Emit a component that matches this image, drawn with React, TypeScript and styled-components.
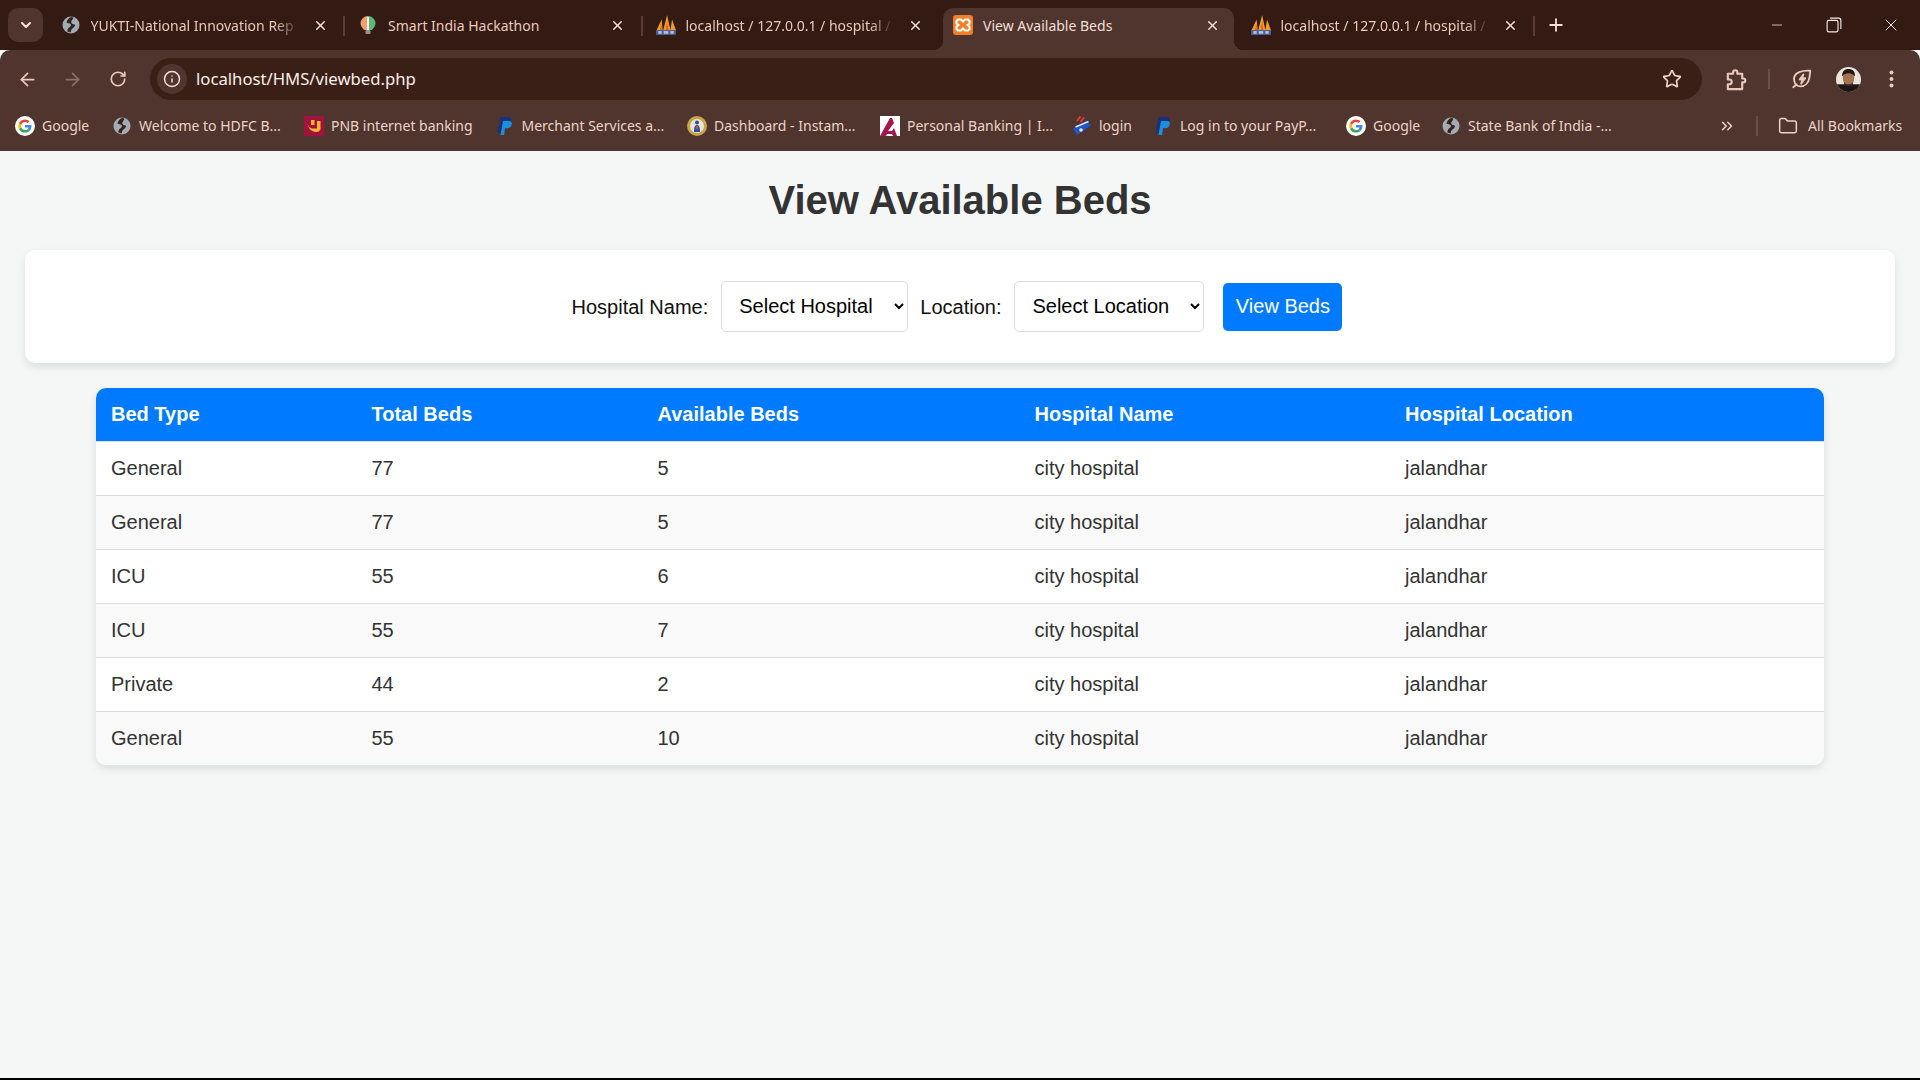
import React from "react";
import styled, { createGlobalStyle } from "styled-components";
import {
  ArrowLeft,
  ArrowRight,
  ChevronDown,
  ChevronsRight,
  Folder,
  Info,
  Minus,
  Plus,
  RotateCw,
  Star,
  X,
} from "lucide-react";

const GlobalStyle = createGlobalStyle`
  html, body {
    margin: 0;
    padding: 0;
    height: 1080px;
    overflow: hidden;
    background: #f4f7f6;
    font-family: "Liberation Sans", Arial, sans-serif;
  }
  * { box-sizing: border-box; }
`;

const chromeFont = `"Noto Sans", "Open Sans", sans-serif`;

const Shell = styled.div`
  width: 1920px;
  height: 1080px;
  display: flex;
  flex-direction: column;
`;

/* ---------- tab strip ---------- */
const TabStrip = styled.div`
  height: 50px;
  background: #331a12;
  display: flex;
  align-items: flex-end;
  padding-left: 8px;
  flex: none;
`;

const TabSearch = styled.div`
  width: 35px;
  height: 34px;
  margin-bottom: 8px;
  margin-right: 7.5px;
  border-radius: 10px;
  background: #4f352e;
  color: #f7e4dc;
  display: flex;
  align-items: center;
  justify-content: center;
  flex: none;
`;

const Tab = styled.div<{ $active?: boolean; $sep?: boolean }>`
  position: relative;
  width: 290.5px;
  height: 42px;
  margin-right: 7px;
  padding: 0 11px 8px 10px;
  flex: none;
  display: flex;
  align-items: center;
  border-radius: 10px 10px 0 0;
  background: ${(p) => (p.$active ? "#4f352e" : "transparent")};
  color: ${(p) => (p.$active ? "#f3dfd7" : "#ecc9bc")};
  font-family: ${chromeFont};
  font-size: 14px;

  ${(p) =>
    p.$active
      ? `
    &::before, &::after {
      content: "";
      position: absolute;
      bottom: 0;
      width: 10px;
      height: 10px;
    }
    &::before { left: -10px; background: radial-gradient(circle at 0 0, transparent 10px, #4f352e 10.5px); }
    &::after { right: -10px; background: radial-gradient(circle at 100% 0, transparent 10px, #4f352e 10.5px); }
  `
      : ""}

  ${(p) =>
    p.$sep
      ? `
    &::after {
      content: "";
      position: absolute;
      right: -4px;
      top: 8px;
      width: 2px;
      height: 20px;
      background: #5a3e35;
    }
  `
      : ""}
`;

const TabIcon = styled.span`
  width: 20px;
  height: 20px;
  flex: none;
  margin-right: 10px;
  display: flex;
  align-items: center;
  justify-content: center;

  svg {
    flex: none;
  }
`;

const TabTitle = styled.span<{ $fade?: boolean }>`
  flex: 1;
  min-width: 0;
  white-space: nowrap;
  ${(p) =>
    p.$fade
      ? `-webkit-mask-image: linear-gradient(90deg, #000 88%, transparent 100%);
         mask-image: linear-gradient(90deg, #000 88%, transparent 100%);`
      : ""}
`;

const TabClose = styled.span`
  width: 20px;
  height: 20px;
  flex: none;
  margin-left: 10px;
  display: flex;
  align-items: center;
  justify-content: center;
  color: #f5dfd6;
`;

const NewTab = styled.div`
  width: 24px;
  height: 34px;
  margin-left: 6px;
  margin-bottom: 8px;
  display: flex;
  align-items: center;
  justify-content: center;
  color: #f5dfd6;
  flex: none;
`;

const WindowControls = styled.div`
  margin-left: auto;
  height: 50px;
  padding-right: 1px;
  align-self: flex-start;
  display: flex;
  color: #f4e6e0;
`;

const WindowButton = styled.div`
  width: 57px;
  height: 50px;
  display: flex;
  align-items: center;
  justify-content: center;
`;

/* ---------- toolbar ---------- */
const Toolbar = styled.div`
  height: 50px;
  flex: none;
  background: #4f352e;
  border-radius: 10px 10px 0 0;
  display: flex;
  align-items: flex-end;
  padding-left: 5px;
  color: #ebc9bc;
`;

const NavButton = styled.div<{ $dim?: boolean }>`
  width: 45px;
  height: 42px;
  flex: none;
  display: flex;
  align-items: center;
  justify-content: center;
  color: ${(p) => (p.$dim ? "#8d6f65" : "#ebc9bc")};
`;

const Omnibox = styled.div`
  width: 1552px;
  height: 42px;
  margin-left: 10px;
  flex: none;
  border-radius: 21px;
  background: #3a1f17;
  display: flex;
  align-items: center;
  padding: 0 20px 0 7px;
`;

const InfoChip = styled.div`
  width: 30px;
  height: 30px;
  border-radius: 50%;
  background: #4f352e;
  color: #f5e2da;
  flex: none;
  display: flex;
  align-items: center;
  justify-content: center;
`;

const UrlText = styled.span`
  margin-left: 9px;
  flex: 1;
  color: #fbeee8;
  font-family: ${chromeFont};
  font-size: 16.7px;
  line-height: 22px;
  padding-bottom: 1px;
`;

const ToolbarIcons = styled.div`
  flex: 1;
  height: 42px;
  display: flex;
  align-items: center;
`;

const ToolbarIcon = styled.div<{ $width: number }>`
  width: ${(p) => p.$width}px;
  height: 42px;
  flex: none;
  display: flex;
  align-items: center;
  justify-content: center;
`;

const ToolbarDivider = styled.div`
  width: 2px;
  height: 20px;
  flex: none;
  background: #6b4e44;
`;

/* ---------- bookmarks ---------- */
const BookmarkBar = styled.div`
  height: 51px;
  flex: none;
  background: #4f352e;
  display: flex;
  align-items: center;
  padding-left: 15px;
  font-family: ${chromeFont};
  font-size: 14px;
  color: #ecd3c9;
`;

const Bookmark = styled.div<{ $width: number }>`
  width: ${(p) => p.$width}px;
  flex: none;
  display: flex;
  align-items: center;
  gap: 7px;
  white-space: nowrap;
`;

const BookmarkIcon = styled.span`
  width: 20px;
  height: 20px;
  flex: none;
  display: flex;
  align-items: center;
  justify-content: center;
`;

const BookmarkOverflow = styled.div`
  margin-left: 93px;
  width: 30px;
  flex: none;
  display: flex;
  justify-content: center;
  color: #ecd3c9;
`;

const BookmarkDivider = styled.div`
  width: 2px;
  height: 20px;
  margin: 0 20px 0 14px;
  background: #6b4e44;
  flex: none;
`;

const AllBookmarks = styled.div`
  display: flex;
  align-items: center;
  gap: 10px;
  white-space: nowrap;
`;

/* ---------- page ---------- */
const Page = styled.main`
  flex: 1;
  min-height: 0;
  background: #f4f7f6;
  padding: 0 25px;
`;

const Title = styled.h1`
  margin: 0;
  padding: 26px 0 27px;
  text-align: center;
  font-size: 40px;
  line-height: 46px;
  font-weight: 700;
  color: #333;
`;

const FilterCard = styled.form`
  height: 113px;
  background: #fff;
  border-radius: 10px;
  box-shadow: 0 4px 8px rgba(0, 0, 0, 0.1);
  display: flex;
  align-items: center;
  justify-content: center;
  padding-right: 6px;
  font-size: 20px;
  margin-bottom: 25px;
`;

const FilterLabel = styled.label`
  color: #111;
  margin-right: 13px;
  padding-top: 1px;
`;

const FilterSelect = styled.select<{ $width: number }>`
  font-family: "Liberation Sans", Arial, sans-serif;
  font-size: 20px;
  width: ${(p) => p.$width}px;
  height: 51px;
  padding: 0 4px 2px 13px;
  border: 1px solid #ddd;
  border-radius: 5px;
  background: #fff;
  color: #000;
  margin-right: 12px;
`;

const ViewButton = styled.button`
  margin-left: 7px;
  width: 119px;
  height: 48px;
  border: 0;
  border-radius: 5px;
  background: #007bff;
  color: #fff;
  font-family: "Liberation Sans", Arial, sans-serif;
  font-size: 20px;
  padding: 0;
`;

const TableWrap = styled.div`
  width: 1728px;
  margin: 0 auto;
  border-radius: 10px;
  overflow: hidden;
  box-shadow: 0 4px 8px rgba(0, 0, 0, 0.1);
  background: #fff;
`;

const BedTable = styled.table`
  width: 100%;
  border-collapse: collapse;
  table-layout: fixed;
  font-size: 20px;
  line-height: 23px;
`;

const HeadCell = styled.th`
  background: #007bff;
  color: #fff;
  font-weight: 700;
  text-align: left;
  padding: 15px;
  border-bottom: 1px solid #ddd;
`;

const BodyRow = styled.tr`
  &:nth-child(even) {
    background: #f9f9f9;
  }
  &:last-child td {
    border-bottom: 0;
  }
`;

const BodyCell = styled.td`
  color: #333;
  padding: 15px;
  border-bottom: 1px solid #ddd;
`;

const BottomEdge = styled.div`
  height: 2px;
  background: #000;
  flex: none;
`;

/* ---------- favicons ---------- */
const Globe = ({ size = 18 }: { size?: number }) => (
  <svg width={size} height={size} viewBox="0 0 18 18">
    <circle cx="9" cy="9" r="8.5" fill="#a3abb3" />
    <path
      d="M9 1C6.5 2 5 4 4.5 6.5c1.5 1 3 .5 4 1.5s.2 2.500-1 3.200c-1 .6-2 1.500-2.200 4 1 .7 2.400 1 3.700 1-.5-1.500.5-3 1.800-4s2.500-2 2-3.700c-1.700-.2-3.200-.7-3.600-2C8.900 5 10.500 4 11.500 1.500 10.800 1.200 9.800 1 9 1z"
      fill="#33241f"
    />
  </svg>
);

const GoogleG = () => (
  <svg width="20" height="20" viewBox="0 0 20 20">
    <circle cx="10" cy="10" r="10" fill="#fff" />
    <path d="M16.4 10.2c0-.5 0-.9-.1-1.300H10v2.500h3.600c-.2.8-.6 1.500-1.300 2l2.100 1.600c1.200-1.200 2-2.900 2-4.800z" fill="#4285f4" />
    <path d="M10 16.600c1.800 0 3.300-.6 4.400-1.600l-2.100-1.600c-.6.4-1.400.7-2.300.7-1.800 0-3.200-1.200-3.800-2.800L4 12.900c1.100 2.200 3.400 3.700 6 3.700z" fill="#34a853" />
    <path d="M6.200 11.300c-.3-.8-.3-1.800 0-2.600L4 7.100c-.9 1.800-.9 4 0 5.800l2.200-1.600z" fill="#fbbc05" />
    <path d="M10 6.100c1 0 1.900.3 2.600 1l1.900-1.900C13.300 4.100 11.800 3.400 10 3.400c-2.600 0-4.900 1.500-6 3.700l2.200 1.600C6.800 7.300 8.200 6.100 10 6.100z" fill="#ea4335" />
  </svg>
);

const Bulb = () => (
  <svg width="18" height="20" viewBox="0 0 18 20">
    <path d="M9 1a7.500 7.500 0 0 0-7.500 7.500C1.500 11.500 4 13.500 5 15h4z" fill="#f0a070" />
    <path d="M9 1a7.500 7.500 0 0 1 7.500 7.500c0 3-2.500 5-3.500 6.500H9z" fill="#5cb878" />
    <rect x="8" y="2" width="2" height="13" fill="#f5efe6" />
    <rect x="6.500" y="15" width="5" height="4" rx="1" fill="#8a959c" />
  </svg>
);

const Pma = () => (
  <svg width="22" height="22" viewBox="0 0 20 20">
    <path d="M1.500 14.500 6 5l1 9.500zM7.500 14.500 11 1l3 13.500zM14 14.500 15.500 5l3.500 9.500z" fill="#f29a2e" />
    <path d="M4.500 14.500 6 8.500v6zM10 14.500l1-8 1 8z" fill="#c9661a" />
    <rect x="1" y="14.500" width="18" height="4.500" fill="#4f639b" />
    <rect x="3" y="15.500" width="3" height="2.500" fill="#b3bedc" />
    <rect x="8" y="15.500" width="4" height="2.500" fill="#b3bedc" />
    <rect x="14" y="15.500" width="3" height="2.500" fill="#b3bedc" />
  </svg>
);

const Xampp = () => (
  <svg width="20" height="20" viewBox="0 0 20 20">
    <rect width="20" height="20" rx="3" fill="#f2802a" />
    <path
      d="M5 4.500h3l2 2 2-2h3l1.500 1.500v2.500L14.500 10l2 1.500V14L15 15.500h-3l-2-2-2 2H5L3.500 14v-2.500l2-1.500-2-1.500V6z"
      fill="none"
      stroke="#fff"
      strokeWidth="2"
    />
  </svg>
);

const Pnb = () => (
  <svg width="20" height="20" viewBox="0 0 20 20">
    <rect width="20" height="20" fill="#a2123c" />
    <path d="M3.500 5c0 5 2 7.500 6 7.500H13V5h3.500v8.500c-1 1.700-2.500 2.500-4 2.500-5.500 0-9-4-9-11z" fill="#f5b82e" />
    <rect x="7" y="4" width="3.500" height="5" fill="#f5b82e" />
  </svg>
);

const PayPal = () => (
  <svg width="18" height="20" viewBox="0 0 18 20">
    <path d="M4.500 1h7.500c3 0 4 2 3.500 4.500-.5 3-3 5-6 5H7.500L6.500 17H1.500z" fill="#17317f" />
    <path d="M7 5h6.500c1.800 0 2.700 1.300 2.300 3.200-.5 2.500-2.500 4-5 4H9l-.8 6.800H4.500z" fill="#1c8fd8" />
  </svg>
);

const Seal = () => (
  <svg width="20" height="20" viewBox="0 0 20 20">
    <circle cx="10" cy="10" r="10" fill="#c9a54a" />
    <circle cx="10" cy="10" r="7" fill="#e8e4d2" />
    <circle cx="10" cy="6.500" r="2" fill="#2a4fa8" />
    <path d="M7 16c0-5 1-7 3-7s3 2 3 7z" fill="#2a4fa8" />
    <rect x="9" y="10" width="2" height="3" fill="#e0492f" />
  </svg>
);

const Axis = () => (
  <svg width="20" height="20" viewBox="0 0 20 20">
    <rect width="20" height="20" fill="#fff" />
    <path d="M0 20 10 2h2l2 5-6 8h4l2-3 3 8h-4l-1-2H7l-1 2z" fill="#a3174d" />
  </svg>
);

const LoginCard = () => (
  <svg width="22" height="22" viewBox="0 0 20 20">
    <path d="M8.500 .5 5 5M12 1.500 8.500 6" stroke="#e53935" strokeWidth="2" />
    <path d="M1 12.500 15 4.500l4 5L5 19z" fill="#1f55c4" />
    <path d="M3.500 11 16.500 5.500" stroke="#dfe7f7" strokeWidth="1.400" />
    <circle cx="9" cy="14" r="1.800" fill="#dfe7f7" />
  </svg>
);

const PuzzleIcon = () => (
  <svg width="23" height="23" viewBox="0 0 24 24" fill="none" stroke="#ebc9bc" strokeWidth="2.200" strokeLinejoin="round">
    <path d="M4 6h5.500V4.500a2.200 2.200 0 0 1 4.400 0V6H19v5h1.200a2 2 0 0 1 0 4H19v7H4v-5h1.500a2.500 2.500 0 0 0 0-5H4z" />
  </svg>
);

const LeafBolt = () => (
  <svg width="22" height="22" viewBox="0 0 24 24" fill="none" stroke="#ebc9bc" strokeWidth="2" strokeLinejoin="round" strokeLinecap="round">
    <path d="M21 3c0 0-7-.5-12 1.500C4.500 6.500 2.500 10 3.500 14c.7 3.500 3.500 6 7 6 5 0 8.500-4 9.500-9 .5-3 .8-6 1-8z" />
    <path d="M2.500 21 6 18" />
    <path d="M13.500 7 9.500 12.500h3.500L11 17l4.500-6H12z" />
  </svg>
);

const RestoreIcon = () => (
  <svg width="16" height="16" viewBox="0 0 14 14" fill="none" stroke="#f4e6e0" strokeWidth="1">
    <rect x="1" y="3" width="9.500" height="10" rx="1.500" />
    <path d="M3.500 1h7.500a2 2 0 0 1 2 2v7.500" />
  </svg>
);

const Avatar = () => (
  <svg width="25" height="25" viewBox="0 0 26 26">
    <defs>
      <clipPath id="avatar-clip">
        <circle cx="13" cy="13" r="13" />
      </clipPath>
    </defs>
    <g clipPath="url(#avatar-clip)">
      <rect width="26" height="26" fill="#e8e6df" />
      <rect y="18" width="26" height="8" fill="#1c1614" />
      <ellipse cx="13" cy="11.500" rx="6" ry="7.500" fill="#a87252" />
      <path d="M6.500 10C6 4.500 9 2 13 2s7.500 2.500 6.500 8c-2-2.800-3.500-3.500-6.500-3.500s-4.500.7-6.500 3.500z" fill="#241713" />
      <path d="M8 15c2 4 8 4 10 0l-1 4.500H9z" fill="#3a2a24" />
    </g>
  </svg>
);

const MenuDots = () => (
  <svg width="5" height="18" viewBox="0 0 5 18" fill="#ebc9bc">
    <circle cx="2.500" cy="2.500" r="2" />
    <circle cx="2.500" cy="9" r="2" />
    <circle cx="2.500" cy="15.500" r="2" />
  </svg>
);

const tabs = [
  { title: "YUKTI-National Innovation Rep", icon: <Globe />, fade: true, sep: true },
  { title: "Smart India Hackathon", icon: <Bulb />, sep: true },
  { title: "localhost / 127.0.0.1 / hospital /", icon: <Pma />, fade: true },
  { title: "View Available Beds", icon: <Xampp />, active: true },
  { title: "localhost / 127.0.0.1 / hospital /", icon: <Pma />, fade: true, sep: true },
];

const bookmarks = [
  { label: "Google", icon: <GoogleG />, width: 97 },
  { label: "Welcome to HDFC B...", icon: <Globe />, width: 192 },
  { label: "PNB internet banking", icon: <Pnb />, width: 190.5 },
  { label: "Merchant Services a...", icon: <PayPal />, width: 192.5 },
  { label: "Dashboard - Instam...", icon: <Seal />, width: 193 },
  { label: "Personal Banking | I...", icon: <Axis />, width: 192 },
  { label: "login", icon: <LoginCard />, width: 81 },
  { label: "Log in to your PayP...", icon: <PayPal />, width: 193 },
  { label: "Google", icon: <GoogleG />, width: 95 },
  { label: "State Bank of India -...", icon: <Globe />, width: 178 },
];

const columns = ["Bed Type", "Total Beds", "Available Beds", "Hospital Name", "Hospital Location"];
const columnWidths = [260.5, 286, 377, 370.5, 434];

const rows = [
  ["General", "77", "5"],
  ["General", "77", "5"],
  ["ICU", "55", "6"],
  ["ICU", "55", "7"],
  ["Private", "44", "2"],
  ["General", "55", "10"],
];

export default function App() {
  return (
    <Shell>
      <GlobalStyle />
      <TabStrip>
        <TabSearch>
          <ChevronDown size={16} strokeWidth={3} />
        </TabSearch>
        {tabs.map((tab, i) => (
          <Tab key={i} $active={tab.active} $sep={tab.sep}>
            <TabIcon>{tab.icon}</TabIcon>
            <TabTitle $fade={tab.fade}>{tab.title}</TabTitle>
            <TabClose>
              <X size={15} strokeWidth={2.4} />
            </TabClose>
          </Tab>
        ))}
        <NewTab>
          <Plus size={20} strokeWidth={2.2} />
        </NewTab>
        <WindowControls>
          <WindowButton>
            <Minus size={16} strokeWidth={1.2} />
          </WindowButton>
          <WindowButton>
            <RestoreIcon />
          </WindowButton>
          <WindowButton>
            <X size={20} strokeWidth={1.2} />
          </WindowButton>
        </WindowControls>
      </TabStrip>

      <Toolbar>
        <NavButton>
          <ArrowLeft size={21} strokeWidth={2} />
        </NavButton>
        <NavButton $dim>
          <ArrowRight size={21} strokeWidth={2} />
        </NavButton>
        <NavButton>
          <RotateCw size={18} strokeWidth={2.2} />
        </NavButton>
        <Omnibox>
          <InfoChip>
            <Info size={18} strokeWidth={2} />
          </InfoChip>
          <UrlText>localhost/HMS/viewbed.php</UrlText>
          <Star size={20} strokeWidth={2} color="#f0d5ca" />
        </Omnibox>
        <ToolbarIcons>
          <ToolbarIcon $width={66}>
            <PuzzleIcon />
          </ToolbarIcon>
          <ToolbarDivider />
          <ToolbarIcon $width={63}>
            <LeafBolt />
          </ToolbarIcon>
          <ToolbarIcon $width={30}>
            <Avatar />
          </ToolbarIcon>
          <ToolbarIcon $width={57}>
            <MenuDots />
          </ToolbarIcon>
        </ToolbarIcons>
      </Toolbar>

      <BookmarkBar>
        {bookmarks.map((b, i) => (
          <Bookmark key={i} $width={b.width}>
            <BookmarkIcon>{b.icon}</BookmarkIcon>
            <span>{b.label}</span>
          </Bookmark>
        ))}
        <BookmarkOverflow>
          <ChevronsRight size={18} strokeWidth={2} />
        </BookmarkOverflow>
        <BookmarkDivider />
        <AllBookmarks>
          <Folder size={20} strokeWidth={1.8} />
          All Bookmarks
        </AllBookmarks>
      </BookmarkBar>

      <Page>
        <Title>View Available Beds</Title>
        <FilterCard>
          <FilterLabel>Hospital Name:</FilterLabel>
          <FilterSelect $width={187} defaultValue="">
            <option value="">Select Hospital</option>
            <option>city hospital</option>
          </FilterSelect>
          <FilterLabel>Location:</FilterLabel>
          <FilterSelect $width={190} defaultValue="">
            <option value="">Select Location</option>
            <option>jalandhar</option>
          </FilterSelect>
          <ViewButton type="button">View Beds</ViewButton>
        </FilterCard>
        <TableWrap>
          <BedTable>
            <colgroup>
              {columnWidths.map((w, i) => (
                <col key={i} width={w} />
              ))}
            </colgroup>
            <thead>
              <tr>
                {columns.map((c) => (
                  <HeadCell key={c}>{c}</HeadCell>
                ))}
              </tr>
            </thead>
            <tbody>
              {rows.map((r, i) => (
                <BodyRow key={i}>
                  {r.map((v, j) => (
                    <BodyCell key={j}>{v}</BodyCell>
                  ))}
                  <BodyCell>city hospital</BodyCell>
                  <BodyCell>jalandhar</BodyCell>
                </BodyRow>
              ))}
            </tbody>
          </BedTable>
        </TableWrap>
      </Page>
      <BottomEdge />
    </Shell>
  );
}
